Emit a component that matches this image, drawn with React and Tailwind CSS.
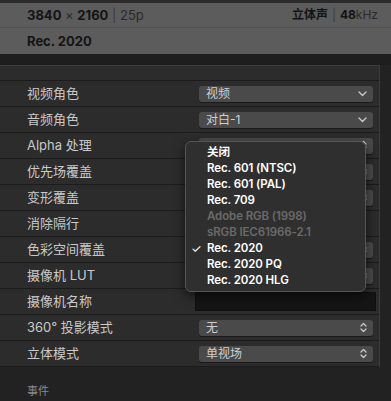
import React from "react";

const font = { fontFamily: '"Inter", "Noto Sans CJK SC", sans-serif' };

function ChevDown() {
  return (
    <svg width="9" height="6" viewBox="0 0 9 6" className="shrink-0">
      <path d="M1 1l3.5 3.5L8 1" fill="none" stroke="#c8c8c8" strokeWidth="1.4" strokeLinecap="round" strokeLinejoin="round" />
    </svg>
  );
}

function ChevUpDown() {
  return (
    <svg width="7" height="11" viewBox="0 0 7 11" className="shrink-0">
      <path d="M1 4l2.5-2.5L6 4M1 7l2.5 2.5L6 7" fill="none" stroke="#c8c8c8" strokeWidth="1.3" strokeLinecap="round" strokeLinejoin="round" />
    </svg>
  );
}

function Select({ value, double }) {
  return (
    <div className="w-[174px] h-[16px] rounded-[3px] bg-[#4a4a4a] flex items-center justify-between pl-[7px] pr-[6px] shadow-[0_1px_0_#1a1a1a]">
      <span className="text-[12px] text-[#cfcfcf] leading-none">{value}</span>
      {double ? <ChevUpDown /> : <ChevDown />}
    </div>
  );
}

const rows = [
  { label: "视频角色", value: "视频" },
  { label: "音频角色", value: "对白-1" },
  { label: "Alpha 处理", value: "", double: true },
  { label: "优先场覆盖", value: "", double: true },
  { label: "变形覆盖", value: "", double: true },
  { label: "消除隔行", value: null },
  { label: "色彩空间覆盖", value: "", double: true },
  { label: "摄像机 LUT", value: "", double: true },
  { label: "摄像机名称", input: true },
  { label: "360° 投影模式", value: "无", double: true },
  { label: "立体模式", value: "单视场", double: true },
];

const items = [
  { t: "关闭" },
  { t: "Rec. 601 (NTSC)" },
  { t: "Rec. 601 (PAL)" },
  { t: "Rec. 709" },
  { t: "Adobe RGB (1998)", dis: true },
  { t: "sRGB IEC61966-2.1", dis: true },
  { t: "Rec. 2020", check: true },
  { t: "Rec. 2020 PQ" },
  { t: "Rec. 2020 HLG" },
];

export default function App() {
  return (
    <div className="relative w-[391px] h-[401px] overflow-hidden bg-[#222222]" style={font}>
      <div className="h-[3px] bg-[#2a2a2a]" />
      <div className="bg-[#5c5c5c]">
        <div className="h-[25px] flex items-center justify-between pl-[27px] pr-[13px] border-b border-[#525252]">
          <div className="text-[13px] text-[#141414] leading-none">
            <span className="font-bold">3840</span>
            <span className="text-[#2a2a2a]"> × </span>
            <span className="font-bold">2160</span>
            <span className="text-[#3a3a3a]"> | </span>
            <span className="text-[#2a2a2a]">25p</span>
          </div>
          <div className="text-[12px] text-[#141414] leading-none flex items-center">
            <span className="font-semibold">立体声</span>
            <span className="text-[#3a3a3a] mx-[4px]">|</span>
            <span className="font-bold">48</span>
            <span className="text-[#2a2a2a]">kHz</span>
          </div>
        </div>
        <div className="h-[26px] flex items-center pl-[27px]">
          <span className="text-[13px] font-bold text-[#141414] leading-none">Rec. 2020</span>
        </div>
      </div>
      <div className="h-[11px] bg-[#1e1e1e]" />
      <div className="w-[380px] bg-[#2c2c2c] border-t border-r border-[#3c3c3c]">
        <div className="h-[14px]" />
        {rows.map((r, i) => (
          <div key={i} className="h-[26px] flex items-center border-t border-[#1b1b1b]">
            <div className="w-[199px] pl-[27px] text-[13px] text-[#c9c9c9] leading-none">{r.label}</div>
            {r.input ? (
              <div className="ml-[-4px] w-[181px] h-[19px] bg-[#151515] border border-[#0f0f0f]" />
            ) : r.value === null ? null : (
              <Select value={r.value} double={r.double} />
            )}
          </div>
        ))}
        <div className="h-[1px] bg-[#1b1b1b]" />
      </div>
      <div className="pl-[27px] pt-[19px] text-[11px] text-[#8a8a8a] leading-none">事件</div>

      <div className="absolute left-[185px] top-[141px] w-[181px] h-[151px] rounded-[6px] bg-[#2f2f2f] border border-[#555555] shadow-[0_4px_12px_rgba(0,0,0,0.6)] pt-[3px]">
        {items.map((it, i) => (
          <div key={i} className="h-[16px] flex items-center relative pl-[21px]">
            {it.check && (
              <span className="absolute left-[5px] text-[12px] text-white leading-none">✓</span>
            )}
            <span className={"text-[11.5px] font-semibold tracking-[-0.1px] leading-none " + (it.dis ? "text-[#6a6a6a]" : "text-white")}>{it.t}</span>
          </div>
        ))}
      </div>
    </div>
  );
}
